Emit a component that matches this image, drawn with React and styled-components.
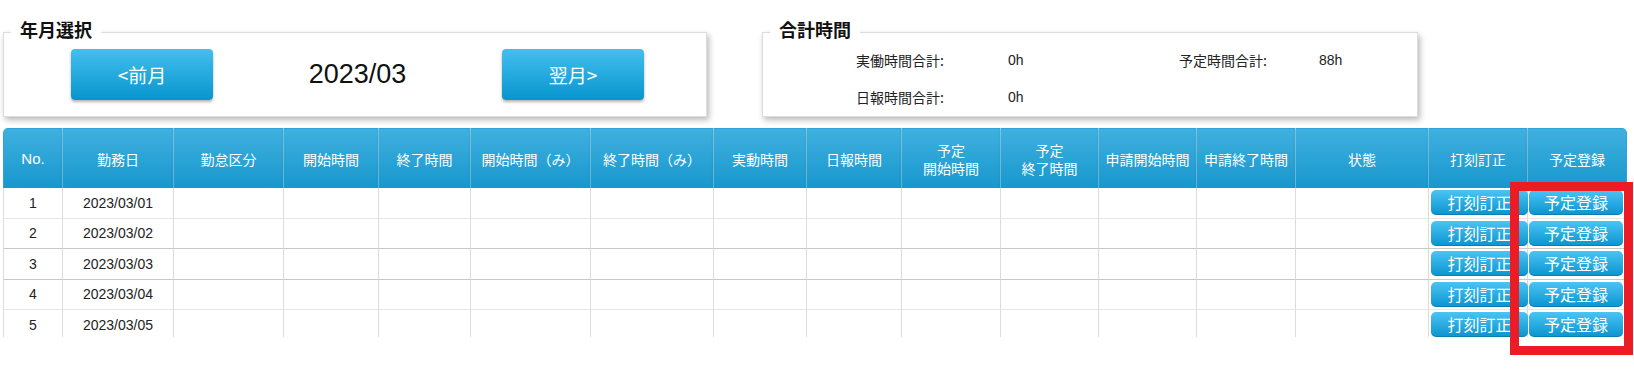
import React from 'react';
import styled, { createGlobalStyle } from 'styled-components';

const GlobalStyle = createGlobalStyle`
  body {
    margin: 0;
    background: #ffffff;
    font-family: 'Liberation Sans', 'Noto Sans CJK JP', sans-serif;
    color: #222;
  }
`;

const Page = styled.div`
  position: relative;
  width: 1634px;
  height: 377px;
  padding: 32px 0 0 3px;
  box-sizing: border-box;
  overflow: hidden;
`;

const TopRow = styled.div`
  display: flex;
  gap: 55px;
`;

const Panel = styled.section`
  position: relative;
  width: ${p => p.$width}px;
  height: 85px;
  box-sizing: border-box;
  border: 1px solid #dcdcdc;
  background: #fff;
  box-shadow: 2px 3px 6px rgba(0, 0, 0, 0.28);
`;

const Legend = styled.h2`
  position: absolute;
  top: -15px;
  left: 7px;
  margin: 0;
  padding: 0 9px;
  background: #fff;
  font: bold 18px/22px 'Noto Sans CJK JP', sans-serif;
  color: #111;
`;

const MonthNav = styled.div`
  display: flex;
  align-items: center;
  height: 100%;
  padding-left: 67px;
`;

const NavButton = styled.button`
  width: 142px;
  height: 51px;
  border: none;
  border-radius: 4px;
  background: linear-gradient(#44bfed, #0795cf);
  box-shadow: 0 2px 3px rgba(0, 0, 0, 0.3);
  color: #fff;
  font: 19px 'Noto Sans CJK JP', sans-serif;
  padding: 0;
  cursor: pointer;
`;

const MonthLabel = styled.div`
  width: 289px;
  text-align: center;
  font: 27px 'Liberation Sans', sans-serif;
  color: #111;
`;

const Totals = styled.div`
  display: grid;
  grid-template-columns: 181px 203px 120px auto;
  row-gap: 17px;
  padding-top: 17px;
  line-height: 20px;
`;

const TotalLabel = styled.div`
  text-align: right;
  font: 14px/20px 'Noto Sans CJK JP', sans-serif;
  color: #222;
`;

const TotalValue = styled.div`
  padding-left: ${p => p.$pad}px;
  font: 14px/20px 'Liberation Sans', sans-serif;
  color: #222;
`;

const TableWrap = styled.div`
  margin-top: 11px;
  width: 1624px;
  height: 209px;
  overflow: hidden;
  border-radius: 5px 5px 0 0;
`;

const Table = styled.table`
  width: 1624px;
  table-layout: fixed;
  border-collapse: separate;
  border-spacing: 0;
`;

const Th = styled.th`
  height: 60px;
  padding: 0;
  background: linear-gradient(#3fb0df, #1897cd);
  border-top: 1px solid #2ca4d9;
  border-right: 1px solid rgba(255, 255, 255, 0.38);
  box-sizing: border-box;
  color: #fff;
  font: normal 14px/18px 'Noto Sans CJK JP', sans-serif;
  white-space: pre-line;
  text-align: center;
  box-shadow: 0 2px 3px rgba(0, 0, 0, 0.18);

  &:first-child {
    border-left: 1px solid #2ca4d9;
    font-family: 'Liberation Sans', sans-serif;
    font-size: 15px;
  }
  &:last-child {
    border-right: 1px solid #2ca4d9;
  }
`;

const Td = styled.td`
  height: 30.5px;
  padding: 0;
  box-sizing: border-box;
  background: #fff;
  border-right: 1px solid #dcdcdc;
  border-bottom: 1px solid ${p => (p.$soft ? '#e6e6e6' : '#c8c8c8')};
  text-align: center;
  font: 14px 'Liberation Sans', sans-serif;
  color: #222;

  &:first-child {
    border-left: 1px solid #dcdcdc;
  }
`;

const RowButton = styled.button`
  display: block;
  width: ${p => p.$width}px;
  height: 25px;
  margin-left: ${p => p.$offset}px;
  padding: 0;
  border: none;
  border-radius: 5px;
  background: linear-gradient(#4ac4f3, #0a94d0);
  box-shadow: inset 0 -1px 0 rgba(0, 0, 0, 0.15);
  color: #fff;
  font: 16px/25px 'Noto Sans CJK JP', sans-serif;
  white-space: nowrap;
  cursor: pointer;
`;

const Highlight = styled.div`
  position: absolute;
  left: 1510px;
  top: 182px;
  width: 123px;
  height: 173px;
  box-sizing: border-box;
  border: 9px solid #ec1c24;
  pointer-events: none;
`;

const columns = [
  ['No.', 60],
  ['勤務日', 111],
  ['勤怠区分', 110],
  ['開始時間', 95],
  ['終了時間', 92],
  ['開始時間（み）', 120],
  ['終了時間（み）', 123],
  ['実動時間', 93],
  ['日報時間', 95],
  ['予定\n開始時間', 99],
  ['予定\n終了時間', 98],
  ['申請開始時間', 98],
  ['申請終了時間', 99],
  ['状態', 133],
  ['打刻訂正', 99],
  ['予定登録', 99],
];

// only the rows visible in the scroll area
const days = Array.from({ length: 5 }, (_, i) => ({
  no: i + 1,
  date: `2023/03/${String(i + 1).padStart(2, '0')}`,
}));

const App = () => {
  return (
    <Page>
      <GlobalStyle />
      <TopRow>
        <Panel $width={704}>
          <Legend>年月選択</Legend>
          <MonthNav>
            <NavButton>&lt;前月</NavButton>
            <MonthLabel>2023/03</MonthLabel>
            <NavButton>翌月&gt;</NavButton>
          </MonthNav>
        </Panel>

        <Panel $width={656}>
          <Legend>合計時間</Legend>
          <Totals>
            <TotalLabel>実働時間合計:</TotalLabel>
            <TotalValue $pad={64}>0h</TotalValue>
            <TotalLabel>予定時間合計:</TotalLabel>
            <TotalValue $pad={52}>88h</TotalValue>
            <TotalLabel>日報時間合計:</TotalLabel>
            <TotalValue $pad={64}>0h</TotalValue>
          </Totals>
        </Panel>
      </TopRow>

      <TableWrap>
        <Table>
          <colgroup>
            {columns.map(([name, w]) => (
              <col key={name} style={{ width: w }} />
            ))}
          </colgroup>
          <thead>
            <tr>
              {columns.map(([name]) => (
                <Th key={name}>{name}</Th>
              ))}
            </tr>
          </thead>
          <tbody>
            {days.map(day => {
              const soft = day.no % 3 === 1;
              return (
                <tr key={day.date}>
                  <Td $soft={soft}>{day.no}</Td>
                  <Td $soft={soft}>{day.date}</Td>
                  {columns.slice(2, 14).map(([name]) => (
                    <Td key={name} $soft={soft} />
                  ))}
                  <Td $soft={soft}>
                    <RowButton $width={97} $offset={2}>打刻訂正</RowButton>
                  </Td>
                  <Td $soft={soft}>
                    <RowButton $width={94} $offset={1}>予定登録</RowButton>
                  </Td>
                </tr>
              );
            })}
          </tbody>
        </Table>
      </TableWrap>

      <Highlight />
    </Page>
  );
};

export default App;
